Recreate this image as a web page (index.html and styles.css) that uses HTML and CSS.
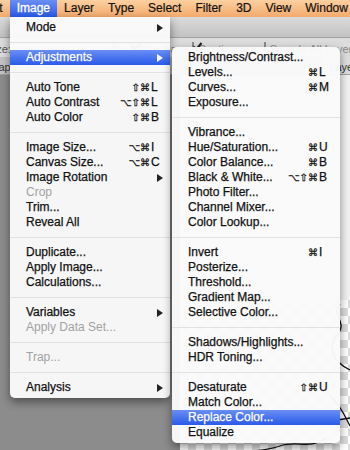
FILE: index.html
```html
<!DOCTYPE html>
<html>
<head>
<meta charset="utf-8">
<title>Image menu</title>
<link rel="stylesheet" href="styles.css">
</head>
<body>
<div class="menubar">
	<span class="first">Edit</span>
	<span class="open">Image</span>
	<span>Layer</span>
	<span>Type</span>
	<span>Select</span>
	<span>Filter</span>
	<span>3D</span>
	<span>View</span>
	<span>Window</span>
</div>
<div class="frame"></div>
<div class="options">
	<span class="opt-label">Sample Size:</span>
	<span class="field"></span>
	<span class="check on"></span><span class="opt-text">Anti-alias</span>
	<span class="check on"></span><span class="opt-text">Contiguous</span>
	<span class="check"></span><span class="opt-text">Sample All Layers</span>
</div>
<div class="tabbar">
	<span class="tab">Snap.psd</span>
	<span class="tab right">Layer 1</span>
</div>
<div class="workspace">
	<div class="pasteboard"></div>
	<div class="document">
		<div class="paper"></div>
		<div class="transparent">
			<svg class="sketch" width="170" height="160" viewBox="0 0 170 160">
				<path d="M160 4 C150 14 168 22 158 34 S150 60 170 70" />
				<path d="M150 96 C160 104 166 118 170 126" />
				<path d="M40 160 C60 150 84 152 100 146 S130 150 146 138" />
				<path d="M120 110 C130 120 150 122 170 118" />
			</svg>
		</div>
	</div>
</div>

<div class="menu main">
	<div class="item"><span class="label">Mode</span><span class="arrow"></span></div>
	<div class="sep"></div>
	<div class="item hl"><span class="label">Adjustments</span><span class="arrow"></span></div>
	<div class="sep"></div>
	<div class="item"><span class="label">Auto Tone</span><span class="keys"><span class="mods">⇧⌘</span><span class="key">L</span></span></div>
	<div class="item"><span class="label">Auto Contrast</span><span class="keys"><span class="mods">⌥⇧⌘</span><span class="key">L</span></span></div>
	<div class="item"><span class="label">Auto Color</span><span class="keys"><span class="mods">⇧⌘</span><span class="key">B</span></span></div>
	<div class="sep"></div>
	<div class="item"><span class="label">Image Size...</span><span class="keys"><span class="mods">⌥⌘</span><span class="key">I</span></span></div>
	<div class="item"><span class="label">Canvas Size...</span><span class="keys"><span class="mods">⌥⌘</span><span class="key">C</span></span></div>
	<div class="item"><span class="label">Image Rotation</span><span class="arrow"></span></div>
	<div class="item off"><span class="label">Crop</span></div>
	<div class="item"><span class="label">Trim...</span></div>
	<div class="item"><span class="label">Reveal All</span></div>
	<div class="sep"></div>
	<div class="item"><span class="label">Duplicate...</span></div>
	<div class="item"><span class="label">Apply Image...</span></div>
	<div class="item"><span class="label">Calculations...</span></div>
	<div class="sep"></div>
	<div class="item"><span class="label">Variables</span><span class="arrow"></span></div>
	<div class="item off"><span class="label">Apply Data Set...</span></div>
	<div class="sep"></div>
	<div class="item off"><span class="label">Trap...</span></div>
	<div class="sep"></div>
	<div class="item"><span class="label">Analysis</span><span class="arrow"></span></div>
</div>

<div class="menu sub">
	<div class="item"><span class="label">Brightness/Contrast...</span></div>
	<div class="item"><span class="label">Levels...</span><span class="keys"><span class="mods">⌘</span><span class="key">L</span></span></div>
	<div class="item"><span class="label">Curves...</span><span class="keys"><span class="mods">⌘</span><span class="key">M</span></span></div>
	<div class="item"><span class="label">Exposure...</span></div>
	<div class="sep"></div>
	<div class="item"><span class="label">Vibrance...</span></div>
	<div class="item"><span class="label">Hue/Saturation...</span><span class="keys"><span class="mods">⌘</span><span class="key">U</span></span></div>
	<div class="item"><span class="label">Color Balance...</span><span class="keys"><span class="mods">⌘</span><span class="key">B</span></span></div>
	<div class="item"><span class="label">Black &amp; White...</span><span class="keys"><span class="mods">⌥⇧⌘</span><span class="key">B</span></span></div>
	<div class="item"><span class="label">Photo Filter...</span></div>
	<div class="item"><span class="label">Channel Mixer...</span></div>
	<div class="item"><span class="label">Color Lookup...</span></div>
	<div class="sep"></div>
	<div class="item"><span class="label">Invert</span><span class="keys"><span class="mods">⌘</span><span class="key">I</span></span></div>
	<div class="item"><span class="label">Posterize...</span></div>
	<div class="item"><span class="label">Threshold...</span></div>
	<div class="item"><span class="label">Gradient Map...</span></div>
	<div class="item"><span class="label">Selective Color...</span></div>
	<div class="sep"></div>
	<div class="item"><span class="label">Shadows/Highlights...</span></div>
	<div class="item"><span class="label">HDR Toning...</span></div>
	<div class="sep"></div>
	<div class="item"><span class="label">Desaturate</span><span class="keys"><span class="mods">⇧⌘</span><span class="key">U</span></span></div>
	<div class="item"><span class="label">Match Color...</span></div>
	<div class="item hl"><span class="label">Replace Color...</span></div>
	<div class="item"><span class="label">Equalize</span></div>
</div>
</body>
</html>
```
FILE: styles.css
```css
*{ margin:0; padding:0; box-sizing:border-box;}
body{ width:350px; height:450px; overflow:hidden; position:relative; background:#8c8c8c; color:#000; font-family:"Liberation Sans", Arial, sans-serif; font-size:12px;}

/* menu bar */
.menubar{ display:flex; height:17px; line-height:17px; white-space:nowrap; background:linear-gradient(#fbd0a0, #f3aa6c);}
.menubar span{ padding:0 7px; color:#111; -webkit-text-stroke:0.2px #111;}
.menubar .first{ margin-left:-25px;}
.menubar .open{ color:#fff; -webkit-text-stroke:0.3px #fff; background:linear-gradient(#6a8ef5, #2a5be9);}

/* application frame behind the menus */
.frame{ height:21px; background:linear-gradient(#dadada, #c2c2c2); border-bottom:1px solid #a3a3a3;}
.options{ display:flex; align-items:flex-start; gap:4px; height:19px; padding-top:4px; background:#dcdcdc; font-size:11px; line-height:11px; color:#555; white-space:nowrap;}
.opt-label{ margin-left:-54px; margin-top:2px;}
.field{ width:22px; height:10px; background:#fff; border:1px solid #999; margin:0 6px 0 98px;}
.check{ position:relative; width:9px; height:9px; background:#fff; border:1px solid #8a8a8a; margin-left:6px;}
.check.on:after{ content:""; position:absolute; left:2px; top:-2px; width:3px; height:7px; border:solid #222; border-width:0 2px 2px 0; transform:rotate(40deg);}
.opt-text{ color:#888; margin-top:2px;}
.tabbar{ display:flex; justify-content:space-between; height:18px; line-height:20px; background:#c3c3c3; border-bottom:1px solid #a0a0a0; font-size:11px; color:#333; white-space:nowrap;}
.tab{ margin-left:-15px;}
.tab.right{ margin-right:-22px; background:#dedede; padding:0 6px;}
.workspace{ display:flex; height:375px;}
.pasteboard{ width:180px; background:#8c8c8c;}
.document{ flex:1; display:flex; flex-direction:column;}
.paper{ height:225px; background:#f1f1f1;}
.transparent{ flex:1; position:relative; background:#fff;
	background-image:conic-gradient(#dcdcdc 25%, #fff 0 50%, #dcdcdc 0 75%, #fff 0);
	background-size:16px 16px;}
.sketch{ position:absolute; left:0; top:0;}
.sketch path{ fill:none; stroke:#111; stroke-width:1.3;}

/* menus */
.menu{ position:absolute; background:rgba(250,250,250,0.97); box-shadow:0 4px 10px rgba(0,0,0,0.45); white-space:nowrap;}
.menu.main{ left:10px; top:17px; width:160px; padding:3px 0 3px; border-radius:0 0 5px 5px;}
.menu.sub{ left:172px; top:47px; width:168px; padding:3px 0 3px; border-radius:5px;}
.item{ display:flex; align-items:center; height:15px; line-height:15px; padding:0 8px 0 16px; color:#111; -webkit-text-stroke:0.25px currentColor;}
.sub .item{ padding-right:10px;}
.item .label{ flex:1;}
.item.off{ color:#a2a2a2; -webkit-text-stroke:0;}
.item.hl{ color:#fff; background:linear-gradient(#6a8ef5, #2a5be9);}
.keys{ display:flex;}
.mods{ font-family:"DejaVu Sans", sans-serif; font-size:10px; padding-right:1px;}
.key{ width:11px;}
.arrow{ width:0; height:0; border-left:6px solid #222; border-top:4px solid transparent; border-bottom:4px solid transparent; margin-right:-1px;}
.item.hl .arrow{ border-left-color:#fff;}
.sep{ height:15px; display:flex; align-items:center;}
.sep:after{ content:""; flex:1; height:1px; background:#e1e1e1;}
```
